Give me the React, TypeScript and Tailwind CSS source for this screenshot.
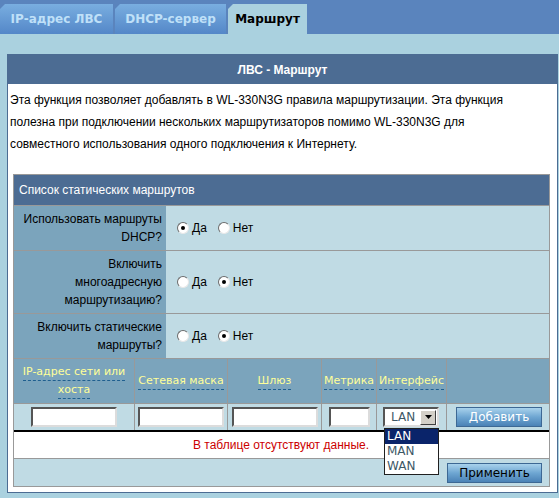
import React from "react";

const tabs = [
  { label: "IP-адрес ЛВС", w: "w-[113px]", active: false },
  { label: "DHCP-сервер", w: "w-[111px]", active: false },
  { label: "Маршрут", w: "w-[79px]", active: true },
];

function Radio({ checked }: { checked: boolean }) {
  return (
    <span className="w-[12px] h-[12px] rounded-full bg-white border border-t-[#6b6b6b] border-l-[#6b6b6b] border-r-[#e8e8e8] border-b-[#e8e8e8] flex items-center justify-center">
      {checked && <span className="w-[4px] h-[4px] rounded-full bg-black" />}
    </span>
  );
}

function RadioPair({ yes }: { yes: boolean }) {
  return (
    <div className="flex items-center pl-[11px]">
      <Radio checked={yes} />
      <span className="ml-[3px]">Да</span>
      <span className="ml-[11px]">
        <Radio checked={!yes} />
      </span>
      <span className="ml-[3px]">Нет</span>
    </div>
  );
}

function Field({ w }: { w: string }) {
  return (
    <div
      className={`${w} h-[20px] bg-white border-2 border-t-[#555] border-l-[#555] border-b-[#dcdcdc] border-r-[#dcdcdc]`}
    />
  );
}

function Btn({ label, light }: { label: string; light?: boolean }) {
  return (
    <div
      className={`h-[20px] flex items-center justify-center border border-[#3d6894] bg-gradient-to-b from-[#a9d2ec] via-[#6ea6d2] to-[#4b82b6] font-['DejaVu_Sans',sans-serif] text-[12px] ${
        light ? "w-[86px] text-white" : "w-[95px] text-black"
      }`}
    >
      {label}
    </div>
  );
}

function HeadLabel({ children }: { children: React.ReactNode }) {
  return (
    <span className="text-[#ffff99] border-b border-dashed border-[#1f5f8f] leading-[16px]">
      {children}
    </span>
  );
}

export default function App() {
  return (
    <div className="w-[559px] h-[498px] bg-[#aad1df] overflow-hidden font-['Liberation_Sans',Arial,sans-serif] text-[12px] text-black">
      <div className="h-[34px] bg-[#5a84bd] flex items-end">
        {tabs.map((t, i) => (
          <div
            key={i}
            className={`${t.w} h-[30px] mr-[2px] flex items-center justify-center font-['DejaVu_Sans',sans-serif] font-bold text-[12px] [clip-path:polygon(5px_0,100%_0,100%_100%,0_100%,0_5px)] ${
              t.active
                ? "bg-[#aad1df] text-black"
                : "bg-gradient-to-b from-[#79aee0] to-[#5487c8] text-[#bfe0f8]"
            }`}
          >
            {t.label}
          </div>
        ))}
      </div>

      <div className="pt-[20px] pl-[7px] pr-[1px]">
        <div className="border border-[#4c6c93] bg-white pb-[5px]">
          <div className="h-[29px] bg-[#4c6c93] text-white font-bold flex items-center justify-center text-[12px]">
            ЛВС - Маршрут
          </div>
          <p className="pt-[5px] pl-[2px] leading-[22px]">
            Эта функция позволяет добавлять в WL-330N3G правила маршрутизации. Эта функция
            <br />
            полезна при подключении нескольких маршрутизаторов помимо WL-330N3G для
            <br />
            совместного использования одного подключения к Интернету.
          </p>

          <div className="ml-[5px] mt-[19px] w-[537px] border border-[#999]">
            <div className="h-[30px] bg-[#4c6c93] text-white pl-[5px] flex items-center">
              Список статических маршрутов
            </div>

            {[
              { label: ["Использовать маршруты", "DHCP?"], yes: true },
              { label: ["Включить", "многоадресную", "маршрутизацию?"], yes: false },
              { label: ["Включить статические", "маршруты?"], yes: false },
            ].map((r, i) => (
              <div key={i} className="flex border-t border-[#999] bg-[#c0dbe4]">
                <div className="w-[152px] bg-[#7ba4bc] text-right pr-[4px] py-[4px] leading-[18px]">
                  {r.label.map((l, j) => (
                    <div key={j}>{l}</div>
                  ))}
                </div>
                <div className="flex items-center">
                  <RadioPair yes={r.yes} />
                </div>
              </div>
            ))}

            <div className="flex border-t border-[#999] bg-[#7ba4bc] h-[45px] font-['DejaVu_Sans',sans-serif] text-[11px] text-center">
              <div className="w-[120px] flex flex-col items-center justify-center gap-[1px]">
                <HeadLabel>IP-адрес сети или</HeadLabel>
                <HeadLabel>хоста</HeadLabel>
              </div>
              <div className="w-[93px] border-l border-[#999] flex items-center justify-center">
                <HeadLabel>Сетевая маска</HeadLabel>
              </div>
              <div className="w-[94px] border-l border-[#999] flex items-center justify-center">
                <HeadLabel>Шлюз</HeadLabel>
              </div>
              <div className="w-[55px] border-l border-[#999] flex items-center justify-center">
                <HeadLabel>Метрика</HeadLabel>
              </div>
              <div className="w-[70px] border-l border-[#999] flex items-center justify-center">
                <HeadLabel>Интерфейс</HeadLabel>
              </div>
              <div className="flex-1 border-l border-[#999]" />
            </div>

            <div className="flex border-t border-[#999] bg-[#c0dbe4] h-[27px]">
              <div className="w-[120px] flex items-center justify-center">
                <Field w="w-[86px]" />
              </div>
              <div className="w-[93px] border-l border-[#999] flex items-center justify-center">
                <Field w="w-[86px]" />
              </div>
              <div className="w-[94px] border-l border-[#999] flex items-center justify-center">
                <Field w="w-[86px]" />
              </div>
              <div className="w-[55px] border-l border-[#999] flex items-center justify-center">
                <Field w="w-[41px]" />
              </div>
              <div className="w-[70px] border-l border-[#999] flex items-center pl-[6px]">
                <div className="relative">
                  <div className="w-[56px] h-[20px] bg-white border-2 border-t-[#555] border-l-[#555] border-b-[#dcdcdc] border-r-[#dcdcdc] flex items-center font-['DejaVu_Sans',sans-serif] text-[12px] text-[#3d5866]">
                    <span className="flex-1 pl-[6px]">LAN</span>
                    <span className="w-[16px] h-[15px] mr-[1px] bg-[#d4d0c8] border border-t-white border-l-white border-b-[#404040] border-r-[#404040] flex items-center justify-center">
                      <svg width="7" height="4" viewBox="0 0 7 4">
                        <path d="M0 0h7L3.5 4z" fill="#000" />
                      </svg>
                    </span>
                  </div>
                  <div className="absolute left-[1px] top-[21px] w-[55px] bg-white border border-[#202020] z-10 font-['DejaVu_Sans',sans-serif] text-[12px] leading-[15px] text-[#3d5866]">
                    <div className="bg-[#0a246a] text-white pl-[2px]">LAN</div>
                    <div className="pl-[2px]">MAN</div>
                    <div className="pl-[2px]">WAN</div>
                  </div>
                </div>
              </div>
              <div className="flex-1 border-l border-[#999] flex items-center pl-[9px]">
                <Btn label="Добавить" light />
              </div>
            </div>

            <div className="h-[28px] border-t-2 border-black bg-white flex items-center justify-center text-[#cc0000] pr-[1px]">
              В таблице отсутствуют данные.
            </div>
            <div className="h-[28px] border-t border-[#999] bg-[#c0dbe4] flex items-center justify-end pr-[7px]">
              <Btn label="Применить" />
            </div>
          </div>
        </div>
      </div>
    </div>
  );
}
